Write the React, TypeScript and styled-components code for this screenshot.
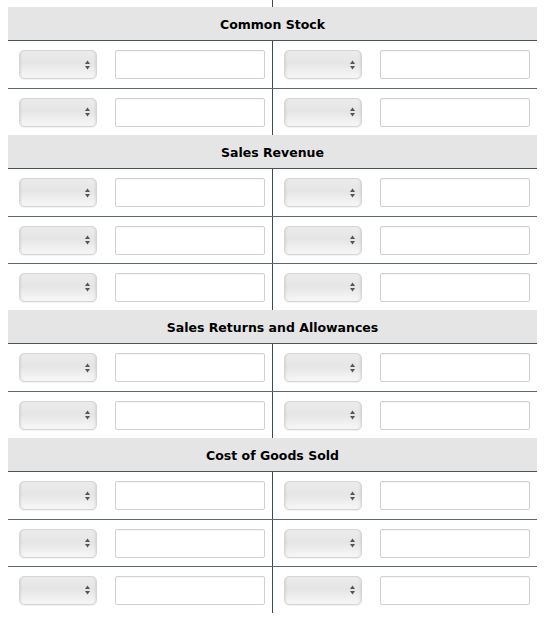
import React from "react";
import styled, { createGlobalStyle } from "styled-components";

const GlobalStyle = createGlobalStyle`
  html, body {
    margin: 0;
    padding: 0;
    background: #fff;
  }

  body {
    font-family: "DejaVu Sans", Verdana, sans-serif;
    color: #000;
  }
`;

const Ledger = styled.div`
  width: 529px;
  margin-left: 8px;
`;

const Row = styled.div<{ divided?: boolean; height: number }>`
  display: grid;
  grid-template-columns: 265px 264px;
  height: ${ ({height}) => height }px;
  box-sizing: border-box;
  border-top: ${ ({divided}) => divided ? "1px solid #5a6670" : "none" };
`;

const Cell = styled.div<{ left?: boolean }>`
  display: flex;
  align-items: center;
  gap: 18px;
  box-sizing: border-box;
  padding: 0 7px 0 11px;
  border-right: ${ ({left}) => left ? "1px solid #3c4852" : "none" };
`;

const SectionHeader = styled.div`
  height: 34px;
  box-sizing: border-box;
  background: #e5e5e5;
  border-bottom: 1px solid #46525c;
  display: flex;
  align-items: center;
  justify-content: center;
  font-size: 12.5px;
  font-weight: bold;
  padding-top: 1px;
`;

const SelectBox = styled.div`
  position: relative;
  width: 78px;
  height: 29px;
  flex: none;
`;

const Select = styled.select`
  appearance: none;
  -webkit-appearance: none;
  width: 100%;
  height: 100%;
  margin: 0;
  box-sizing: border-box;
  border: 1px solid #d6d6d6;
  border-radius: 5px;
  background: linear-gradient(to bottom, #ececec 0%, #e5e5e5 45%, #f7f7f7 100%);
  box-shadow: inset 2px 0 2px -1px rgba(0, 0, 0, 0.08),
    inset -2px 0 2px -1px rgba(0, 0, 0, 0.08),
    0 1px 1px rgba(0, 0, 0, 0.06);
  outline: none;
`;

const Arrows = styled.svg`
  position: absolute;
  right: 7px;
  top: 50%;
  margin-top: -5px;
  width: 5px;
  height: 10px;
  pointer-events: none;
`;

const AmountInput = styled.input`
  width: 150px;
  height: 29px;
  flex: none;
  margin: 0;
  box-sizing: border-box;
  border: 1px solid #d0d0d0;
  border-radius: 2px;
  background: #fff;
  box-shadow: inset 0 1px 1px rgba(0, 0, 0, 0.04);
  outline: none;
`;

interface Section {
  title: string,
  rows: number
}

const sections: Section[] = [
  {title: "Common Stock", rows: 2},
  {title: "Sales Revenue", rows: 3},
  {title: "Sales Returns and Allowances", rows: 2},
  {title: "Cost of Goods Sold", rows: 3},
];

const AccountSelect = () => (
  <SelectBox>
    <Select defaultValue="">
      <option value=""></option>
      <option value="debit">Debit</option>
      <option value="credit">Credit</option>
    </Select>
    <Arrows viewBox="0 0 5 10">
      <path d="M2.5 0.5 L5 4 L0 4 Z" fill="#555"/>
      <path d="M0 6 L5 6 L2.5 9.5 Z" fill="#555"/>
    </Arrows>
  </SelectBox>
);

const Entry = () => (
  <>
    <AccountSelect/>
    <AmountInput type="text"/>
  </>
);

const App = () => {
  return (
    <>
      <GlobalStyle/>
      <Ledger>
        <Row height={ 7 }>
          <Cell left/>
          <Cell/>
        </Row>
        { sections.map((section) => (
          <div key={ section.title }>
            <SectionHeader>{ section.title }</SectionHeader>
            { Array.from({length: section.rows}).map((_, i) => (
              <Row key={ i } height={ 47 } divided={ i > 0 }>
                <Cell left><Entry/></Cell>
                <Cell><Entry/></Cell>
              </Row>
            )) }
          </div>
        )) }
      </Ledger>
    </>
  );
};

export default App;
